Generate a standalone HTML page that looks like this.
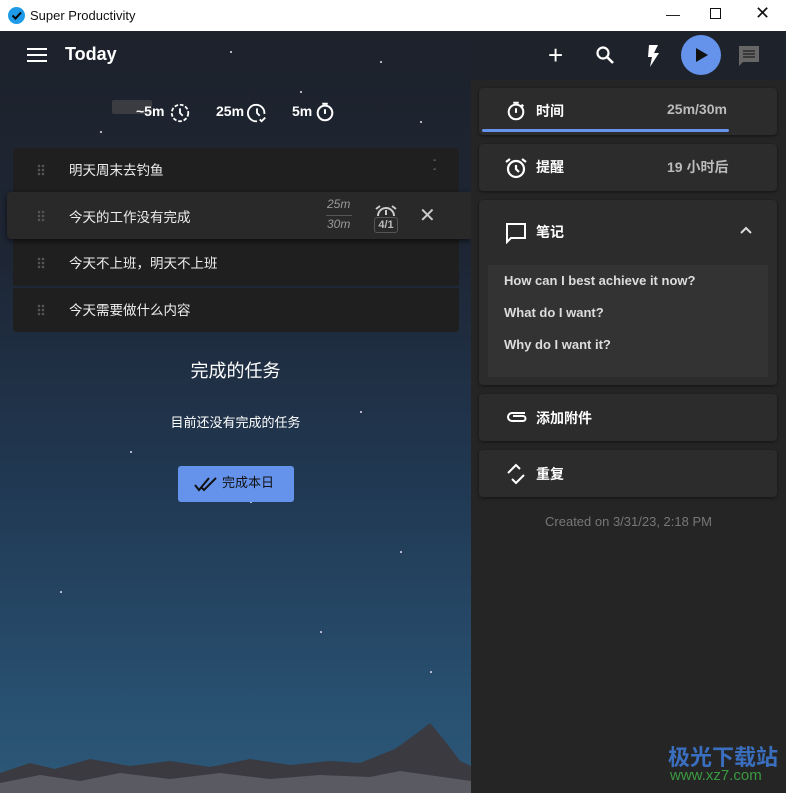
<!DOCTYPE html>
<html><head><meta charset="utf-8"><style>
*{margin:0;padding:0;box-sizing:border-box}
body{width:786px;height:793px;overflow:hidden;font-family:"Liberation Sans","Noto Sans CJK SC",sans-serif;background:#252525;position:relative;color:#fff}
.tb{position:absolute;left:0;top:0;width:786px;height:31px;background:#fff;color:#111;font-size:13px}
.left{position:absolute;left:0;top:31px;width:471px;height:762px;background:linear-gradient(180deg,#1d222b 0%,#1e2635 30%,#213a55 62%,#285070 88%,#2e5878 100%)}
.right{position:absolute;left:471px;top:80px;width:315px;height:713px;background:#252525}
.hdr{position:absolute;left:471px;top:31px;width:315px;height:49px;background:#1e222a}
.card{position:absolute;left:479px;width:298px;background:#2c2c2c;border-radius:4px;box-shadow:0 1px 3px rgba(0,0,0,.5);font-size:14px;font-weight:bold}
.card .lab{position:absolute;left:57px}
.row{position:absolute;left:13px;width:446px;background:#1f1f1f;font-size:13.5px;color:#eee}
.row .t{position:absolute;left:56px}
.grip{position:absolute;left:24px;width:8px;height:12px;background:radial-gradient(circle,#555 1.2px,transparent 1.4px) 0 0/4px 4px}
.star{position:absolute;width:1.5px;height:1.5px;background:#ccd;border-radius:50%}
</style></head><body>
<div class="tb">
<svg style="position:absolute;left:8px;top:7px" width="17" height="17" viewBox="0 0 17 17"><circle cx="8.5" cy="8.5" r="8.5" fill="#1e9be8"/><path d="M4.5 8.5l3 3 5.5-6" stroke="#000" stroke-width="2" fill="none"/></svg>
<span style="position:absolute;left:30px;top:8px">Super Productivity</span>
<span style="position:absolute;left:666px;top:6px;font-size:14px">—</span>
<span style="position:absolute;left:710px;top:8px;width:11px;height:11px;border:1px solid #111"></span>
<span style="position:absolute;left:755px;top:3px;font-size:18px">✕</span>
</div>
<div class="left">
<div class="star" style="left:230px;top:20px"></div><div class="star" style="left:380px;top:30px"></div><div class="star" style="left:300px;top:60px"></div><div class="star" style="left:420px;top:90px"></div><div class="star" style="left:100px;top:100px"></div><div class="star" style="left:360px;top:380px"></div><div class="star" style="left:250px;top:470px"></div><div class="star" style="left:130px;top:420px"></div><div class="star" style="left:400px;top:520px"></div><div class="star" style="left:60px;top:560px"></div><div class="star" style="left:320px;top:600px"></div><div class="star" style="left:430px;top:640px"></div>
<svg style="position:absolute;left:0;top:680px" width="471" height="82" viewBox="0 0 471 82"><path d="M0 62 L30 52 L55 58 L90 48 L130 55 L170 50 L210 56 L250 48 L290 54 L330 50 L360 52 L395 38 L420 20 L430 12 L445 30 L460 50 L471 55 L471 82 L0 82Z" fill="#3a3a40"/><path d="M0 72 L40 64 L80 70 L120 62 L170 68 L220 62 L270 68 L320 64 L370 66 L400 60 L471 70 L471 82 L0 82Z" fill="#8a8d95" opacity=".4"/></svg>
</div>
<div style="position:absolute;left:27px;top:48px;width:20px;height:2px;background:#fff;box-shadow:0 6px #fff,0 12px #fff"></div>
<div style="position:absolute;left:65px;top:44px;font-size:18px;font-weight:bold">Today</div>
<div style="position:absolute;left:112px;top:100px;width:40px;height:14px;background:#3a3c42;border-radius:2px"></div>
<div style="position:absolute;left:136px;top:103px;font-size:14px;font-weight:bold">~5m</div>
<svg style="position:absolute;left:169px;top:102px" width="22" height="22" viewBox="0 0 24 24"><circle cx="12" cy="12" r="9" fill="none" stroke="#fff" stroke-width="2" stroke-dasharray="4 2"/><path d="M12 7v5l3 3" stroke="#fff" stroke-width="2" fill="none"/></svg>
<div style="position:absolute;left:216px;top:103px;font-size:14px;font-weight:bold">25m</div>
<svg style="position:absolute;left:246px;top:102px" width="22" height="22" viewBox="0 0 24 24"><path d="M20 13A9 9 0 1 0 12 21" fill="none" stroke="#fff" stroke-width="2"/><path d="M12 7v5l3 3M15 19l2 2 4-4" stroke="#fff" stroke-width="2" fill="none"/></svg>
<div style="position:absolute;left:292px;top:103px;font-size:14px;font-weight:bold">5m</div>
<svg style="position:absolute;left:314px;top:101px" width="22" height="22" viewBox="0 0 24 24"><circle cx="12" cy="13" r="8" fill="none" stroke="#fff" stroke-width="2.2"/><path d="M9 3h6M12 9v5" stroke="#fff" stroke-width="2.2"/></svg>
<div class="row" style="top:148px;height:44px;border-radius:4px 4px 0 0"><div class="grip" style="top:16px"></div><span class="t" style="top:11px">明天周末去钓鱼</span><span style="position:absolute;left:420px;top:8px;color:#888;font-size:10px;line-height:9px">-<br>-</span></div>
<div class="row" style="top:239px;height:47px"><div class="grip" style="top:18px"></div><span class="t" style="top:13px">今天不上班，明天不上班</span></div>
<div class="row" style="top:288px;height:44px;border-radius:0 0 4px 4px"><div class="grip" style="top:16px"></div><span class="t" style="top:11px">今天需要做什么内容</span></div>
<div style="position:absolute;left:7px;top:192px;width:464px;height:47px;background:#292929;box-shadow:0 2px 6px rgba(0,0,0,.6);font-size:13.5px;color:#eee;border-radius:4px 0 0 4px">
<div class="grip" style="left:30px;top:18px"></div><span style="position:absolute;left:62px;top:14px">今天的工作没有完成</span>
<span style="position:absolute;left:320px;top:5px;font-size:12px;font-style:italic;color:#999">25m</span>
<div style="position:absolute;left:319px;top:23px;width:26px;height:1px;background:#555"></div>
<span style="position:absolute;left:320px;top:25px;font-size:12px;font-style:italic;color:#999">30m</span>
<svg style="position:absolute;left:368px;top:13px" width="22" height="12" viewBox="0 0 22 12"><path d="M3 11A8 8 0 0 1 19 11M1 4l4-3M21 4l-4-3M11 5v5" stroke="#ccc" stroke-width="2" fill="none"/></svg>
<div style="position:absolute;left:367px;top:25px;width:24px;height:16px;border:1px solid #555;border-radius:3px;font-size:11px;font-weight:bold;color:#bbb;text-align:center;line-height:14px">4/1</div>
<span style="position:absolute;left:412px;top:11px;font-size:20px;color:#ccc">✕</span>
</div>
<div style="position:absolute;left:0;top:357px;width:471px;text-align:center;font-size:18px">完成的任务</div>
<div style="position:absolute;left:0;top:412px;width:471px;text-align:center;font-size:13px">目前还没有完成的任务</div>
<div style="position:absolute;left:178px;top:466px;width:116px;height:36px;background:#6593ec;border-radius:3px;color:#111;font-size:13px;line-height:34px;padding-left:44px">完成本日</div>
<svg style="position:absolute;left:194px;top:476px" width="24" height="16" viewBox="0 0 24 16"><path d="M1 9l4 5L15 2M8 12l2 2L22 2" stroke="#111" stroke-width="2" fill="none"/></svg>
<div class="hdr"></div>
<div class="right"></div>
<span style="position:absolute;left:548px;top:40px;font-size:26px;font-weight:300">+</span>
<svg style="position:absolute;left:595px;top:45px" width="20" height="20" viewBox="0 0 20 20"><circle cx="8" cy="8" r="5.5" fill="none" stroke="#fff" stroke-width="2.2"/><path d="M12 12l6 6" stroke="#fff" stroke-width="2.6"/></svg>
<svg style="position:absolute;left:645px;top:44px" width="16" height="24" viewBox="0 0 16 24"><path d="M4 1h9l-4 8h5L5 23l2-10H3z" fill="#fff"/></svg>
<div style="position:absolute;left:681px;top:35px;width:40px;height:40px;border-radius:50%;background:#6593ec"></div>
<svg style="position:absolute;left:695px;top:47px" width="14" height="16" viewBox="0 0 14 16"><path d="M1 1l12 7-12 7z" fill="#111"/></svg>
<svg style="position:absolute;left:738px;top:45px" width="22" height="22" viewBox="0 0 22 22"><path d="M1 1h20v16H5l-4 4z" fill="#666"/><path d="M5 6h12M5 9h12M5 12h12" stroke="#2a2a2a" stroke-width="1.5"/></svg>
<div class="card" style="top:88px;height:47px">
<svg style="position:absolute;left:26px;top:12px" width="22" height="22" viewBox="0 0 24 24"><circle cx="12" cy="13" r="8" fill="none" stroke="#fff" stroke-width="2.2"/><path d="M9 3h6M12 9v5M18 5l2 2" stroke="#fff" stroke-width="2.2"/></svg>
<span class="lab" style="top:13px">时间</span><span style="position:absolute;left:188px;top:13px;color:#bbb">25m/30m</span>
<div style="position:absolute;left:3px;top:41px;width:247px;height:3px;background:#6593ec;border-radius:2px"></div></div>
<div class="card" style="top:144px;height:47px">
<svg style="position:absolute;left:25px;top:12px" width="24" height="24" viewBox="0 0 24 24"><circle cx="12" cy="13" r="8" fill="none" stroke="#fff" stroke-width="2.2"/><path d="M12 9v4l3 3M2 6l4-3M22 6l-4-3" stroke="#fff" stroke-width="2.2" fill="none"/></svg>
<span class="lab" style="top:13px">提醒</span><span style="position:absolute;left:188px;top:13px;color:#bbb">19 小时后</span></div>
<div class="card" style="top:200px;height:185px">
<svg style="position:absolute;left:26px;top:22px" width="22" height="22" viewBox="0 0 22 22"><path d="M2 2h18v14H6l-4 4z" fill="none" stroke="#fff" stroke-width="2"/></svg>
<span class="lab" style="top:22px">笔记</span>
<svg style="position:absolute;left:261px;top:26px" width="12" height="8" viewBox="0 0 12 8"><path d="M1 7l5-5 5 5" stroke="#ddd" stroke-width="2" fill="none"/></svg>
<div style="position:absolute;left:9px;top:65px;width:280px;height:112px;background:#333;font-size:13px;color:#ddd">
<div style="position:absolute;left:16px;top:8px">How can I best achieve it now?</div>
<div style="position:absolute;left:16px;top:40px">What do I want?</div>
<div style="position:absolute;left:16px;top:72px">Why do I want it?</div></div></div>
<div class="card" style="top:394px;height:47px">
<svg style="position:absolute;left:26px;top:15px" width="22" height="16" viewBox="0 0 22 16"><path d="M20 4H7a4 4 0 0 0 0 8h11a2.5 2.5 0 0 0 0-5H8" stroke="#fff" stroke-width="2" fill="none"/></svg>
<span class="lab" style="top:14px">添加附件</span></div>
<div class="card" style="top:450px;height:47px">
<svg style="position:absolute;left:25px;top:12px" width="24" height="24" viewBox="0 0 24 24"><path d="M8 7l4-4 4 4M4 11l8-8M16 17l-4 4-4-4M20 13l-8 8" stroke="#fff" stroke-width="2" fill="none"/></svg>
<span class="lab" style="top:14px">重复</span></div>
<div style="position:absolute;left:471px;top:514px;width:315px;text-align:center;font-size:13px;color:#777">Created on 3/31/23, 2:18 PM</div>
<div style="position:absolute;left:668px;top:740px;font-size:22px;font-weight:bold;color:#3a6fc0">极光下载站</div>
<div style="position:absolute;left:670px;top:767px;font-size:15px;color:#3a9a40">www.xz7.com</div>
</body></html>
